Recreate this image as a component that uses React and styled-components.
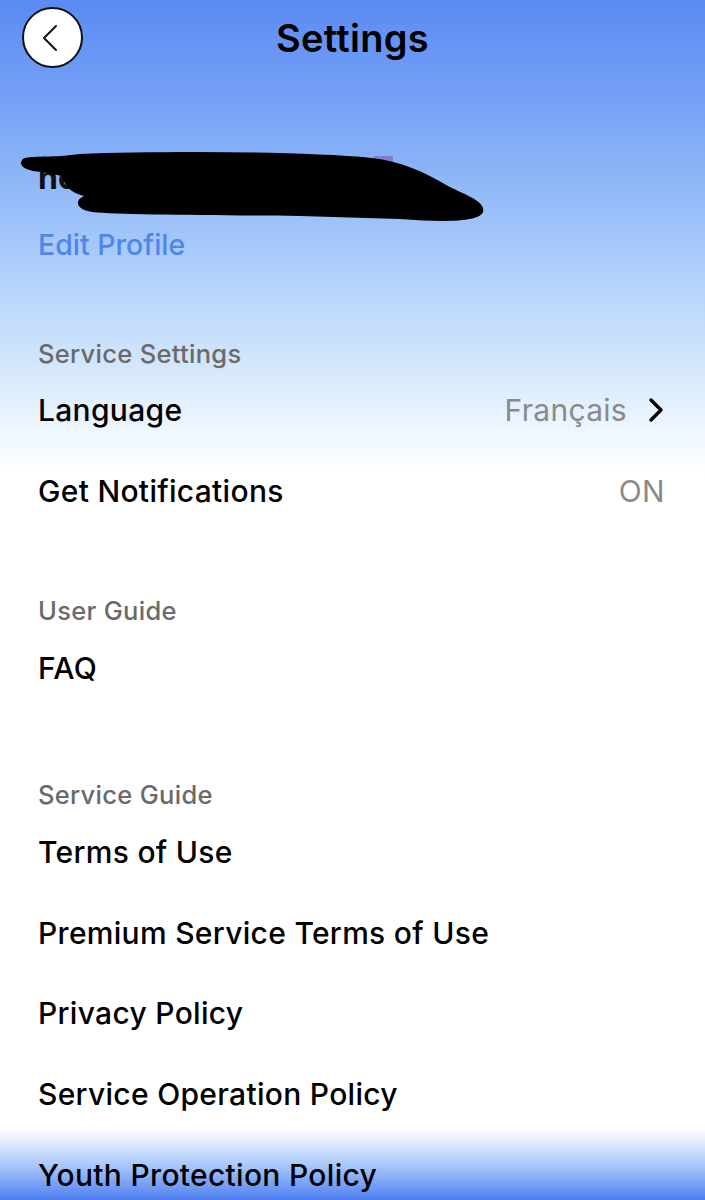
import React from "react";
import styled, { createGlobalStyle } from "styled-components";

const GlobalStyle = createGlobalStyle`
    html, body {
        margin: 0;
        padding: 0;
        background: #ffffff;
    }
    body {
        font-family: "Inter", "Noto Sans", "Liberation Sans", sans-serif;
        -webkit-font-smoothing: antialiased;
    }
`;

const sections = [
    {
        title: "Service Settings",
        space: 74,
        items: [
            { label: "Language", value: "Français", arrow: true },
            { label: "Get Notifications", value: "ON" },
        ],
    },
    {
        title: "User Guide",
        space: 62,
        items: [{ label: "FAQ" }],
    },
    {
        title: "Service Guide",
        space: 69,
        items: [
            { label: "Terms of Use" },
            { label: "Premium Service Terms of Use" },
            { label: "Privacy Policy" },
            { label: "Service Operation Policy" },
            { label: "Youth Protection Policy" },
        ],
    },
];

export default function App() {
    return (
        <>
            <GlobalStyle />
            <Page>
                <Header>
                    <BackButton aria-label="Back">
                        <svg width="20" height="28" viewBox="0 0 20 28">
                            <polyline
                                points="15,2 3,14 15,26"
                                fill="none"
                                stroke="#111"
                                strokeWidth="2"
                                strokeLinecap="round"
                                strokeLinejoin="round"
                            />
                        </svg>
                    </BackButton>
                    <Title>Settings</Title>
                </Header>

                <Profile>
                    <NameLine>
                        <Name>ne</Name>
                        <Scribble viewBox="20 145 470 85" aria-hidden="true">
                            <rect x="374" y="156" width="19" height="7" fill="#7d80c6" />
                            <path
                                d="M22 160 C24 156 40 157 62 156 L80 154 C160 151 300 151 372 158 C400 161 425 172 448 186 C468 196 486 202 483 212 C480 221 450 223 400 219 L300 216 C200 215 120 215 92 212 C76 210 74 200 84 196 C70 193 64 184 62 176 L42 172 C26 171 18 166 22 160 Z"
                                fill="#000"
                            />
                        </Scribble>
                    </NameLine>
                    <EditLink>Edit Profile</EditLink>
                </Profile>

                {sections.map((section) => (
                    <Section key={section.title} space={section.space}>
                        <SectionTitle>{section.title}</SectionTitle>
                        {section.items.map((item) => (
                            <Row key={item.label}>
                                <RowLabel>{item.label}</RowLabel>
                                {item.value && (
                                    <RowValue>
                                        {item.value}
                                        {item.arrow && (
                                            <svg width="18" height="26" viewBox="0 0 18 26">
                                                <polyline
                                                    points="4,3 14,13 4,23"
                                                    fill="none"
                                                    stroke="#000"
                                                    strokeWidth="3.4"
                                                    strokeLinecap="round"
                                                    strokeLinejoin="round"
                                                />
                                            </svg>
                                        )}
                                    </RowValue>
                                )}
                            </Row>
                        ))}
                    </Section>
                ))}
            </Page>
        </>
    );
}

const Page = styled.div`
    height: 1200px;
    overflow: hidden;
    background: linear-gradient(
        to bottom,
        #5b8bf3 0px,
        #77a3f6 110px,
        #9cc2f9 220px,
        #c9e1fb 340px,
        #eef6fe 430px,
        #ffffff 475px,
        #ffffff 1128px,
        #e6f0fe 1140px,
        #a9c8fb 1165px,
        #4e7ff1 1200px
    );
`;

const Header = styled.div`
    height: 76px;
    display: flex;
    align-items: center;
    justify-content: center;
    position: relative;
`;

const BackButton = styled.button`
    position: absolute;
    left: 22px;
    top: 7px;
    width: 61px;
    height: 61px;
    border-radius: 50%;
    border: 2px solid #111;
    background: #ffffff;
    display: flex;
    align-items: center;
    justify-content: center;
    padding: 0 4px 0 0;
`;

const Title = styled.h1`
    margin: 0;
    font-size: 38px;
    font-weight: 600;
    color: #000;
    letter-spacing: 0.3px;
`;

const Profile = styled.div`
    padding: 82px 38px 0;
`;

const NameLine = styled.div`
    position: relative;
    height: 40px;
`;

const Name = styled.div`
    font-size: 32px;
    font-weight: 700;
    line-height: 40px;
    color: #111;
`;

const Scribble = styled.svg`
    position: absolute;
    left: -18px;
    top: -13px;
    width: 470px;
    height: 85px;
`;

const EditLink = styled.div`
    margin-top: 30px;
    font-size: 28.5px;
    line-height: 34px;
    font-weight: 500;
    color: #4f86ea;
`;

const Section = styled.section`
    margin-top: ${(p) => p.space}px;
    padding: 0 40px 0 38px;
`;

const SectionTitle = styled.div`
    height: 34px;
    display: flex;
    align-items: center;
    font-size: 25.5px;
    font-weight: 500;
    letter-spacing: 0.3px;
    color: #6a6a6a;
`;

const Row = styled.div`
    height: 80.8px;
    display: flex;
    align-items: center;
    justify-content: space-between;
`;

const RowLabel = styled.span`
    font-size: 30px;
    font-weight: 500;
    letter-spacing: 0.3px;
    color: #000;
`;

const RowValue = styled.span`
    display: flex;
    align-items: center;
    gap: 20px;
    font-size: 30px;
    font-weight: 400;
    letter-spacing: 0.3px;
    color: #8a8a8a;
`;
